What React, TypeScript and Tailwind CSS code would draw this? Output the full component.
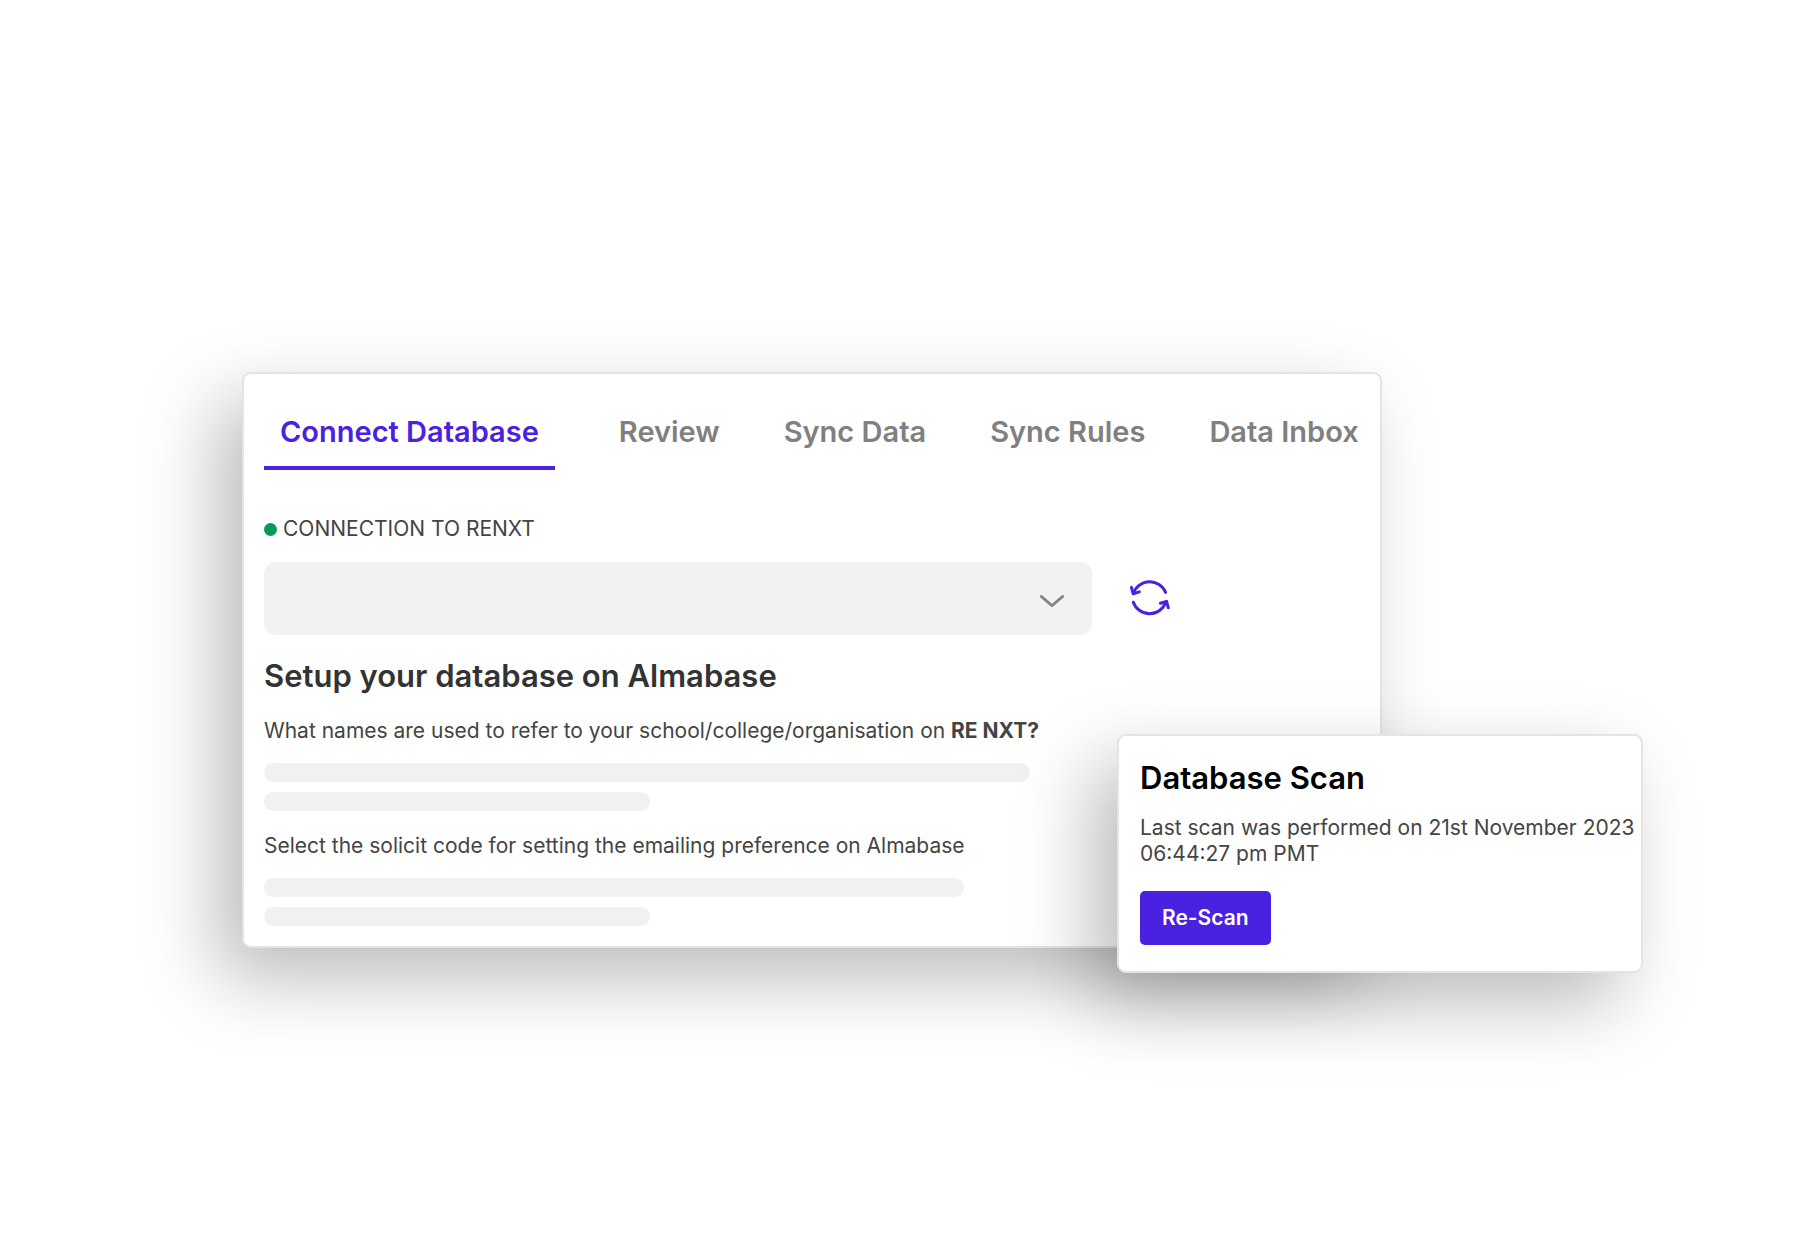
import { useState } from "react";

const tabs = ["Connect Database", "Review", "Sync Data", "Sync Rules", "Data Inbox"];

function Chevron() {
  return (
    <svg
      viewBox="0 0 28 28"
      className="pointer-events-none absolute top-1/2 right-[26px] size-7 -translate-y-1/2"
      fill="none"
      stroke="#868686"
      strokeWidth="2.8"
      strokeLinecap="round"
      strokeLinejoin="round"
      aria-hidden="true"
    >
      <path d="M3.2 11.4 L14 20.6 L24.8 11.4" />
    </svg>
  );
}

function SyncIcon() {
  return (
    <svg
      viewBox="0 0 44 44"
      className="size-11"
      fill="none"
      stroke="#4A21E0"
      strokeWidth="3"
      strokeLinecap="round"
      strokeLinejoin="round"
      aria-hidden="true"
    >
      <path d="M37.6 15.4 A17.2 17.2 0 0 0 5.4 16.4" />
      <path d="M3.4 10.4 L5.2 16.9 L11.3 14.9" />
      <path d="M5.3 25.2 A17.2 17.2 0 0 0 37.8 25" />
      <path d="M32.4 26.3 L38.6 24.4 L40.3 30.8" />
    </svg>
  );
}

function Placeholder({ width }: { width: string }) {
  return (
    <div className="flex flex-col gap-2.5">
      <div className={`h-[19px] w-full rounded-full bg-[#f1f1f1] ${width}`} />
      <div className="h-[19px] w-full max-w-[386px] rounded-full bg-[#f1f1f1]" />
    </div>
  );
}

export default function App() {
  const [active, setActive] = useState(tabs[0]);

  return (
    <main className="min-h-screen bg-white pt-[372px] pr-[171px] pb-20 pl-[242px] font-['Inter',sans-serif] text-[21px] leading-[26px] text-[#444444]">
      <div className="relative">
        <section className="mr-[261px] rounded-[9px] border-2 border-[#e4e4e4] bg-white px-5 pt-10 pb-5 shadow-[-24px_30px_76px_rgba(0,0,0,0.27)]">
          <nav className="flex items-start gap-16 text-[29px] leading-9 font-semibold whitespace-nowrap">
            {tabs.map((tab) => (
              <button
                key={tab}
                type="button"
                onClick={() => setActive(tab)}
                className={
                  tab === active
                    ? "border-b-4 border-[#4A21E0] px-4 pb-4 text-[#4A21E0]"
                    : "border-b-4 border-transparent pb-4 text-[#808080]"
                }
              >
                {tab}
              </button>
            ))}
          </nav>

          <label htmlFor="connection" className="mt-[46px] flex items-center gap-1.5">
            <span className="size-[13px] rounded-full bg-[#059a58]" />
            CONNECTION TO RENXT
          </label>
          <div className="mt-5 flex items-center gap-9">
            <div className="relative max-w-[828px] flex-1">
              <select
                id="connection"
                className="block h-[73px] w-full appearance-none rounded-xl bg-[#f2f2f2] px-5"
              />
              <Chevron />
            </div>
            <button type="button" aria-label="Refresh connection">
              <SyncIcon />
            </button>
          </div>

          <h1 className="mt-[21px] text-[31px] leading-10 font-semibold text-[#333333]">
            Setup your database on Almabase
          </h1>
          <p className="mt-[22px] mb-[19px]">
            What names are used to refer to your school/college/organisation on{" "}
            <strong className="font-bold">RE NXT?</strong>
          </p>
          <Placeholder width="max-w-[766px]" />
          <p className="mt-[22px] mb-[19px]">
            Select the solicit code for setting the emailing preference on Almabase
          </p>
          <Placeholder width="max-w-[700px]" />
        </section>

        <aside className="absolute right-0 -bottom-[25px] w-[526px] rounded-[9px] border-2 border-[#e4e4e4] bg-white px-[21px] pt-[22px] pb-[26px] shadow-[-24px_30px_76px_rgba(0,0,0,0.27)]">
          <h2 className="text-[31px] leading-10 font-semibold text-black">Database Scan</h2>
          <p className="mt-[17px] whitespace-nowrap">
            Last scan was performed on 21st November 2023
            <br />
            06:44:27 pm PMT
          </p>
          <button
            type="button"
            className="mt-6 block h-[54px] rounded-[5px] bg-[#4A21E0] px-[22px] font-semibold text-white"
          >
            Re-Scan
          </button>
        </aside>
      </div>
    </main>
  );
}
